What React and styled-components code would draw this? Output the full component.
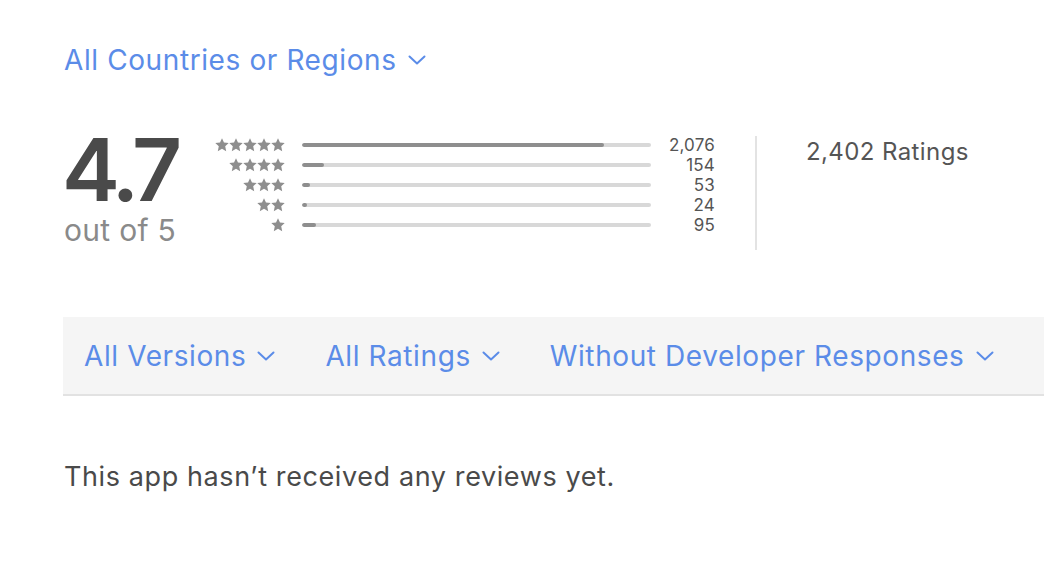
import React from "react";
import styled, { createGlobalStyle } from "styled-components";

const Global = createGlobalStyle`
  html, body { margin: 0; padding: 0; background: #fff; overflow: hidden; }
  body { font-family: Inter, "Noto Sans", "Liberation Sans", sans-serif; -webkit-font-smoothing: antialiased; }
`;

const Page = styled.div`
  width: 1044px;
  height: 588px;
  padding-left: 64px;
  box-sizing: border-box;
  overflow: hidden;
`;

const Picker = styled.button`
  display: inline-flex;
  align-items: center;
  gap: 11px;
  border: 0;
  background: none;
  padding: 0;
  font: inherit;
  color: #5b8ce8;
  font-size: 28px;
  line-height: 32px;
  letter-spacing: 0.6px;
  cursor: pointer;
  white-space: nowrap;
`;

const Top = styled.div`
  padding-top: 44px;
`;

const RatingSection = styled.section`
  display: flex;
  align-items: flex-start;
  margin-top: 54px;
`;

const Score = styled.div`
  display: flex;
  flex-direction: column;
  width: 149px;
`;

const Big = styled.div`
  font-size: 87px;
  font-weight: 600;
  line-height: 80px;
  height: 80px;
  color: #4a4a4a;
  letter-spacing: -5.5px;
  margin-left: -2px;
`;

const OutOf = styled.div`
  font-size: 30px;
  line-height: 34px;
  color: #8a8a8a;
  margin-top: 3px;
  letter-spacing: 0.3px;
`;

const Histogram = styled.div`
  display: flex;
  flex-direction: column;
  margin-top: 5px;
`;

const Row = styled.div`
  display: flex;
  align-items: center;
  height: 20px;
`;

const Stars = styled.div`
  width: 72px;
  display: flex;
  justify-content: flex-end;
  color: #8e8e8e;
`;

const Track = styled.div`
  margin-left: 17px;
  width: 349px;
  height: 4px;
  border-radius: 2px;
  background: #d8d8d8;
  overflow: hidden;
`;

const Fill = styled.div`
  height: 100%;
  background: #8e8e8e;
  border-radius: 2px;
`;

const Count = styled.div`
  width: 64px;
  text-align: right;
  font-size: 17px;
  color: #555;
  letter-spacing: 0.2px;
`;

const Divider = styled.div`
  width: 2px;
  height: 114px;
  background: #e3e3e3;
  margin: 6px 0 0 40px;
`;

const Total = styled.div`
  margin-left: 49px;
  margin-top: 6px;
  font-size: 24px;
  line-height: 32px;
  color: #555;
  letter-spacing: 0.4px;
`;

const FilterBar = styled.div`
  display: flex;
  align-items: center;
  gap: 50px;
  margin-top: 67px;
  margin-left: -1px;
  height: 77px;
  padding-left: 21px;
  background: #f5f5f5;
  border-bottom: 2px solid #e2e2e2;
  width: 1100px;
`;

const Empty = styled.p`
  margin: 65px 0 0;
  font-size: 27px;
  line-height: 32px;
  color: #4a4a4a;
  letter-spacing: 0.6px;
`;

const Chevron = () => (
  <svg width="18" height="10" viewBox="0 0 18 10" fill="none">
    <path d="M1.5 1.5 L9 8.5 L16.5 1.5" stroke="currentColor" strokeWidth="2" strokeLinecap="round" strokeLinejoin="round" />
  </svg>
);

const Star = () => (
  <svg width="14" height="14" viewBox="0 0 24 24" fill="currentColor">
    <path d="M12 0.5 L15.4 7.6 L23.5 8.5 L17.5 14 L19.2 22.5 L12 18.3 L4.8 22.5 L6.5 14 L0.5 8.5 L8.6 7.6 Z" />
  </svg>
);

const rows = [
  { n: 5, count: 2076 },
  { n: 4, count: 154 },
  { n: 3, count: 53 },
  { n: 2, count: 24 },
  { n: 1, count: 95 },
];
const total = 2402;

export default function App() {
  return (
    <>
      <Global />
      <Page>
        <Top>
          <Picker>
            All Countries or Regions <Chevron />
          </Picker>
        </Top>
        <RatingSection>
          <Score>
            <Big>4.7</Big>
            <OutOf>out of 5</OutOf>
          </Score>
          <Histogram>
            {rows.map((r) => (
              <Row key={r.n}>
                <Stars aria-label={`${r.n} stars`}>
                  {Array.from({ length: r.n }, (_, i) => (
                    <Star key={i} />
                  ))}
                </Stars>
                <Track>
                  <Fill style={{ width: `${Math.max(1.5, (r.count / total) * 100)}%` }} />
                </Track>
                <Count>{r.count.toLocaleString("en-US")}</Count>
              </Row>
            ))}
          </Histogram>
          <Divider />
          <Total>2,402 Ratings</Total>
        </RatingSection>
        <FilterBar>
          <Picker>All Versions <Chevron /></Picker>
          <Picker>All Ratings <Chevron /></Picker>
          <Picker>Without Developer Responses <Chevron /></Picker>
        </FilterBar>
        <Empty>This app hasn’t received any reviews yet.</Empty>
      </Page>
    </>
  );
}
